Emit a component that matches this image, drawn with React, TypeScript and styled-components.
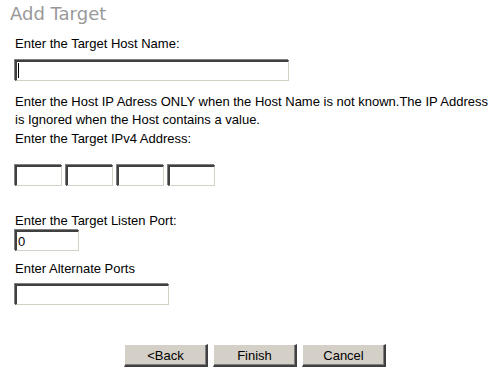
import React from 'react'
import styled, { createGlobalStyle } from 'styled-components'

const GlobalStyle = createGlobalStyle`
body {
margin: 0;
background: #ffffff;
font-family: "Liberation Sans", Arial, sans-serif;
}
`

const App = () => {
    return (
        <Page>
            <GlobalStyle />
            <Title>Add Target</Title>
            <Form>
                <Label top={12}>Enter the Target Host Name:</Label>
                <Focused>
                    <TextBox w={274} top={0} />
                </Focused>

                <Note>
                    Enter the Host IP Adress ONLY when the Host Name is not known.The IP Address is Ignored when the Host contains a value.
                </Note>
                <Label top={2}>Enter the Target IPv4 Address:</Label>
                <IpRow>
                    <TextBox w={47} top={0} />
                    <TextBox w={47} top={0} />
                    <TextBox w={47} top={0} />
                    <TextBox w={47} top={0} />
                </IpRow>

                <Label top={27}>Enter the Target Listen Port:</Label>
                <TextBox w={64} top={2} defaultValue="0" />

                <Label top={10}>Enter Alternate Ports</Label>
                <TextBox w={154} top={8} />
            </Form>

            <ButtonRow>
                <Button>&lt;Back</Button>
                <Button>Finish</Button>
                <Button>Cancel</Button>
            </ButtonRow>
        </Page>
    )
}

export default App


const Page = styled.div`
width: 501px;
height: 384px;
overflow: hidden;
color: #000000;
`

const Title = styled.div`
font-family: "DejaVu Sans", Verdana, sans-serif;
font-size: 18px;
line-height: 20px;
color: #999999;
padding: 4px 0 0 10px;
`

const Form = styled.div`
display: flex;
flex-direction: column;
align-items: flex-start;
padding-left: 15px;
`

const Label = styled.div<{ top: number }>`
font-size: 13px;
line-height: 15px;
margin-top: ${({ top }) => top}px;
`

const Note = styled.div`
font-size: 13px;
line-height: 18px;
margin-top: 12px;
width: 486px;
`

// the host name box has the text caret in it
const Focused = styled.div`
position: relative;
margin-top: 9px;
display: flex;

&::after {
content: "";
position: absolute;
left: 3px;
top: 3px;
width: 1px;
height: 15px;
background: #000000;
}
`

const TextBox = styled.input<{ w: number, top: number }>`
box-sizing: border-box;
width: ${({ w }) => w}px;
height: 21px;
margin: ${({ top }) => top}px 0 0 0;
padding: 0 1px;
font-family: "Liberation Sans", Arial, sans-serif;
font-size: 13px;
color: #000000;
background: #ffffff;
border-style: solid;
border-width: 2px 1px 1px 2px;
border-color: #404040 #d4d0c8 #d4d0c8 #404040;
box-shadow: -1px -1px 0 #808080;
outline: none;
`

const IpRow = styled.div`
display: flex;
gap: 4px;
margin-top: 19px;
`

const ButtonRow = styled.div`
display: flex;
justify-content: center;
gap: 5px;
padding-left: 9px;
margin-top: 39px;
`

const Button = styled.button`
box-sizing: border-box;
width: 84px;
height: 23px;
padding: 0;
font-family: "Liberation Sans", Arial, sans-serif;
font-size: 13px;
color: #000000;
background: #d4d0c8;
border-style: solid;
border-width: 1px 2px 2px 1px;
border-color: #ffffff #404040 #404040 #ffffff;
box-shadow: inset -1px -1px 0 #808080;
cursor: pointer;
`
